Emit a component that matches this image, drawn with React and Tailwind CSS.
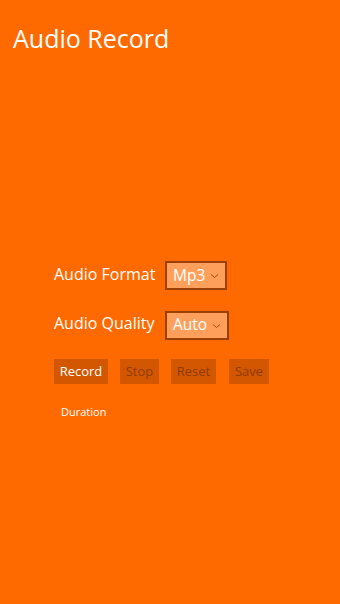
const Select = ({ value, width }) => (
  <div
    className={`flex items-center justify-between border-2 border-[#9c3f00] bg-[#ff9f5c] pl-[6px] pr-[6px] h-[29px] ${width}`}
  >
    <span className="text-[15.5px] text-white leading-none">{value}</span>
    <svg width="9" height="6" viewBox="0 0 9 6" className="mt-[1px]">
      <path d="M1 1.5 L4.5 4.5 L8 1.5" fill="none" stroke="#b24a00" strokeWidth="1" />
    </svg>
  </div>
);

const Btn = ({ label, active, width }) => (
  <button
    className={`h-[25px] bg-[#d25700] text-[13px] leading-none ${width} ${
      active ? 'text-white' : 'text-[#8f3a00]'
    }`}
  >
    {label}
  </button>
);

const App = () => {
  return (
    <div
      className="w-[340px] h-[604px] bg-[#ff6a00] text-white overflow-hidden"
      style={{ fontFamily: '"Open Sans", "Noto Sans", sans-serif' }}
    >
      <h1 className="pl-[13px] pt-[20px] text-[25px] leading-[36px]">Audio Record</h1>

      <main className="pl-[54px] pt-[205px]">
        <div className="flex items-center h-[29px]">
          <span className="w-[111px] text-[16px] -mt-[4px]">Audio Format</span>
          <Select value="Mp3" width="w-[62px]" />
        </div>
        <div className="flex items-center h-[28px] mt-[21px]">
          <span className="w-[111px] text-[16px] -mt-[4px]">Audio Quality</span>
          <Select value="Auto" width="w-[64px]" />
        </div>

        <div className="flex mt-[20px]">
          <Btn label="Record" active width="w-[54px]" />
          <Btn label="Stop" width="w-[39px] ml-[12px]" />
          <Btn label="Reset" width="w-[45px] ml-[12px]" />
          <Btn label="Save" width="w-[40px] ml-[13px]" />
        </div>

        <p className="pl-[7px] mt-[20px] text-[11px]">Duration</p>
      </main>
    </div>
  );
};

export default App;
